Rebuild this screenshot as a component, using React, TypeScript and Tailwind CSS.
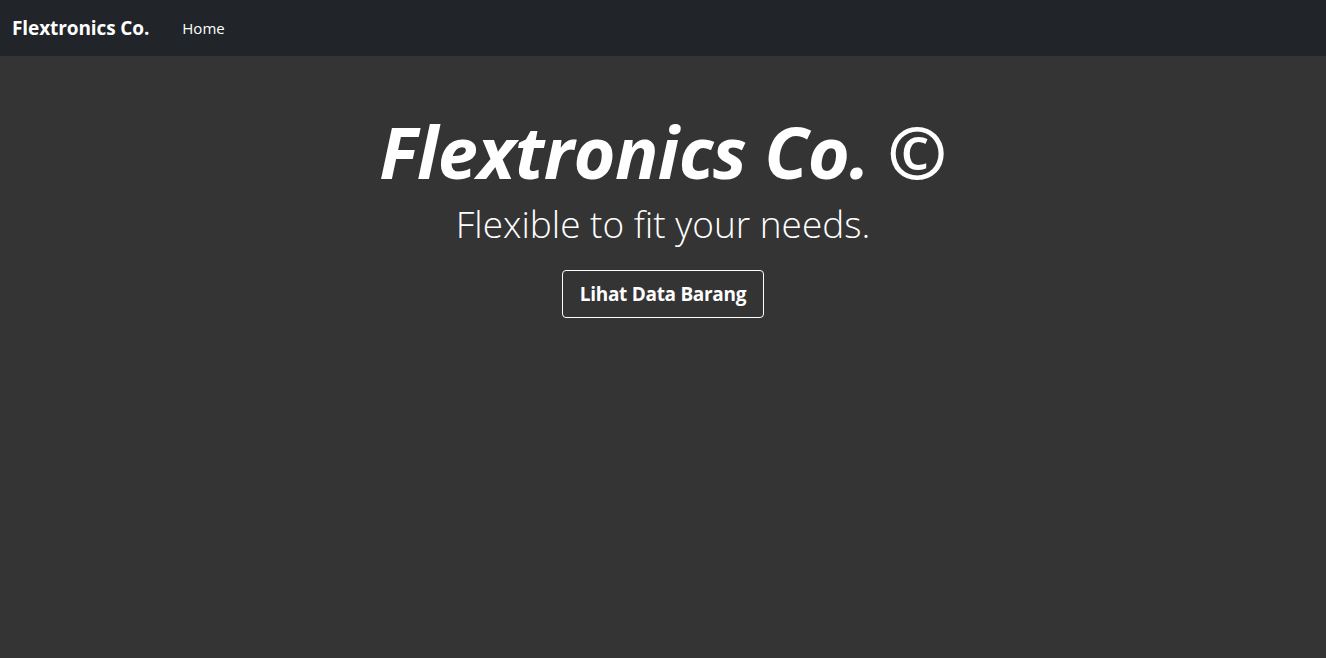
export default function App() {
  return (
    <div className="min-h-screen bg-[#343434] font-['Open_Sans',sans-serif] text-white">
      <nav className="flex h-14 items-center bg-[#212529] px-3">
        <a href="#" className="mr-[33px] text-[19px] font-bold tracking-[-0.1px] text-white">
          Flextronics Co.
        </a>
        <a href="#" className="text-[15px] text-white">
          Home
        </a>
      </nav>

      <main className="flex flex-col items-center pt-[52px]">
        <h1 className="text-[72px] font-bold italic leading-[1.2] tracking-[-0.6px]">
          Flextronics Co. ©
        </h1>
        <p className="mt-[8px] text-[37px] font-light leading-[1.2]">
          Flexible to fit your needs.
        </p>
        <button className="mt-[23px] h-12 w-[202px] rounded-[4px] border border-white text-[19px] font-bold tracking-[-0.3px] text-white">
          Lihat Data Barang
        </button>
      </main>
    </div>
  );
}
